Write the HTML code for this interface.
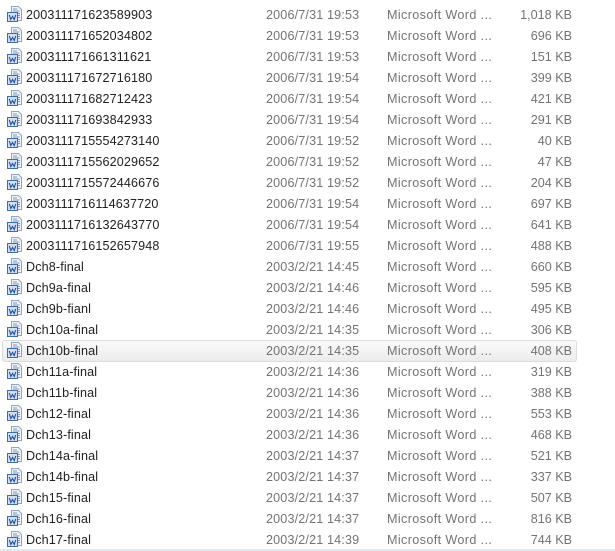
<!DOCTYPE html>
<html><head><meta charset="utf-8"><style>
html,body{margin:0;padding:0;background:#fff}
#p{position:relative;width:615px;height:551px;overflow:hidden;background:#fff;font-family:"Liberation Sans",sans-serif;font-size:12.6px}
.r{position:absolute;left:0;width:615px;height:21px;line-height:21px;white-space:nowrap}
.r span{position:absolute;top:1px}
.n{left:26px;color:#222;letter-spacing:.12px}
.d{left:266px;color:#737373;letter-spacing:.15px}
.t{left:387px;color:#737373;letter-spacing:.38px}
.s{right:43px;color:#737373}
.r svg{position:absolute;left:7px;top:2px}
#sel{position:absolute;left:2px;top:340px;width:573px;height:20px;border:1px solid #dcdcdc;border-radius:3px;background:linear-gradient(#fafafa,#ececec)}
#b{position:absolute;left:0;top:549px;width:615px;height:2px;background:#dfe8f0}
</style></head><body><div id="p">
<svg width="0" height="0" style="position:absolute"><defs><g id="i">
<path d="M4.5 .5H11.5L14.5 3.5V14.5H4.5Z" fill="#eef3f9" stroke="#93a5bf"/>
<path d="M6 3H10M6 5H12.5M11 7.5H13M11 9.5H13M11 11.5H13" stroke="#7f97bb"/>
<rect x=".5" y="6.5" width="10" height="9" fill="#cfdef2" stroke="#3f6cab"/>
<path d="M2.3 9L3.8 13.5L5.5 10.5L7.2 13.5L8.7 9" fill="none" stroke="#234f97" stroke-width="1.1"/>
</g></defs></svg>
<div id="sel"></div>
<div class="r" style="top:4px"><svg width="16" height="16"><use href="#i"/></svg><span class="n">200311171623589903</span><span class="d">2006/7/31 19:53</span><span class="t">Microsoft Word ...</span><span class="s">1,018 KB</span></div>
<div class="r" style="top:25px"><svg width="16" height="16"><use href="#i"/></svg><span class="n">200311171652034802</span><span class="d">2006/7/31 19:53</span><span class="t">Microsoft Word ...</span><span class="s">696 KB</span></div>
<div class="r" style="top:46px"><svg width="16" height="16"><use href="#i"/></svg><span class="n">200311171661311621</span><span class="d">2006/7/31 19:53</span><span class="t">Microsoft Word ...</span><span class="s">151 KB</span></div>
<div class="r" style="top:67px"><svg width="16" height="16"><use href="#i"/></svg><span class="n">200311171672716180</span><span class="d">2006/7/31 19:54</span><span class="t">Microsoft Word ...</span><span class="s">399 KB</span></div>
<div class="r" style="top:88px"><svg width="16" height="16"><use href="#i"/></svg><span class="n">200311171682712423</span><span class="d">2006/7/31 19:54</span><span class="t">Microsoft Word ...</span><span class="s">421 KB</span></div>
<div class="r" style="top:109px"><svg width="16" height="16"><use href="#i"/></svg><span class="n">200311171693842933</span><span class="d">2006/7/31 19:54</span><span class="t">Microsoft Word ...</span><span class="s">291 KB</span></div>
<div class="r" style="top:130px"><svg width="16" height="16"><use href="#i"/></svg><span class="n">2003111715554273140</span><span class="d">2006/7/31 19:52</span><span class="t">Microsoft Word ...</span><span class="s">40 KB</span></div>
<div class="r" style="top:151px"><svg width="16" height="16"><use href="#i"/></svg><span class="n">2003111715562029652</span><span class="d">2006/7/31 19:52</span><span class="t">Microsoft Word ...</span><span class="s">47 KB</span></div>
<div class="r" style="top:172px"><svg width="16" height="16"><use href="#i"/></svg><span class="n">2003111715572446676</span><span class="d">2006/7/31 19:52</span><span class="t">Microsoft Word ...</span><span class="s">204 KB</span></div>
<div class="r" style="top:193px"><svg width="16" height="16"><use href="#i"/></svg><span class="n">2003111716114637720</span><span class="d">2006/7/31 19:54</span><span class="t">Microsoft Word ...</span><span class="s">697 KB</span></div>
<div class="r" style="top:214px"><svg width="16" height="16"><use href="#i"/></svg><span class="n">2003111716132643770</span><span class="d">2006/7/31 19:54</span><span class="t">Microsoft Word ...</span><span class="s">641 KB</span></div>
<div class="r" style="top:235px"><svg width="16" height="16"><use href="#i"/></svg><span class="n">2003111716152657948</span><span class="d">2006/7/31 19:55</span><span class="t">Microsoft Word ...</span><span class="s">488 KB</span></div>
<div class="r" style="top:256px"><svg width="16" height="16"><use href="#i"/></svg><span class="n">Dch8-final</span><span class="d">2003/2/21 14:45</span><span class="t">Microsoft Word ...</span><span class="s">660 KB</span></div>
<div class="r" style="top:277px"><svg width="16" height="16"><use href="#i"/></svg><span class="n">Dch9a-final</span><span class="d">2003/2/21 14:46</span><span class="t">Microsoft Word ...</span><span class="s">595 KB</span></div>
<div class="r" style="top:298px"><svg width="16" height="16"><use href="#i"/></svg><span class="n">Dch9b-fianl</span><span class="d">2003/2/21 14:46</span><span class="t">Microsoft Word ...</span><span class="s">495 KB</span></div>
<div class="r" style="top:319px"><svg width="16" height="16"><use href="#i"/></svg><span class="n">Dch10a-final</span><span class="d">2003/2/21 14:35</span><span class="t">Microsoft Word ...</span><span class="s">306 KB</span></div>
<div class="r" style="top:340px"><svg width="16" height="16"><use href="#i"/></svg><span class="n">Dch10b-final</span><span class="d">2003/2/21 14:35</span><span class="t">Microsoft Word ...</span><span class="s">408 KB</span></div>
<div class="r" style="top:361px"><svg width="16" height="16"><use href="#i"/></svg><span class="n">Dch11a-final</span><span class="d">2003/2/21 14:36</span><span class="t">Microsoft Word ...</span><span class="s">319 KB</span></div>
<div class="r" style="top:382px"><svg width="16" height="16"><use href="#i"/></svg><span class="n">Dch11b-final</span><span class="d">2003/2/21 14:36</span><span class="t">Microsoft Word ...</span><span class="s">388 KB</span></div>
<div class="r" style="top:403px"><svg width="16" height="16"><use href="#i"/></svg><span class="n">Dch12-final</span><span class="d">2003/2/21 14:36</span><span class="t">Microsoft Word ...</span><span class="s">553 KB</span></div>
<div class="r" style="top:424px"><svg width="16" height="16"><use href="#i"/></svg><span class="n">Dch13-final</span><span class="d">2003/2/21 14:36</span><span class="t">Microsoft Word ...</span><span class="s">468 KB</span></div>
<div class="r" style="top:445px"><svg width="16" height="16"><use href="#i"/></svg><span class="n">Dch14a-final</span><span class="d">2003/2/21 14:37</span><span class="t">Microsoft Word ...</span><span class="s">521 KB</span></div>
<div class="r" style="top:466px"><svg width="16" height="16"><use href="#i"/></svg><span class="n">Dch14b-final</span><span class="d">2003/2/21 14:37</span><span class="t">Microsoft Word ...</span><span class="s">337 KB</span></div>
<div class="r" style="top:487px"><svg width="16" height="16"><use href="#i"/></svg><span class="n">Dch15-final</span><span class="d">2003/2/21 14:37</span><span class="t">Microsoft Word ...</span><span class="s">507 KB</span></div>
<div class="r" style="top:508px"><svg width="16" height="16"><use href="#i"/></svg><span class="n">Dch16-final</span><span class="d">2003/2/21 14:37</span><span class="t">Microsoft Word ...</span><span class="s">816 KB</span></div>
<div class="r" style="top:529px"><svg width="16" height="16"><use href="#i"/></svg><span class="n">Dch17-final</span><span class="d">2003/2/21 14:39</span><span class="t">Microsoft Word ...</span><span class="s">744 KB</span></div>
<div id="b"></div>
</div></body></html>
